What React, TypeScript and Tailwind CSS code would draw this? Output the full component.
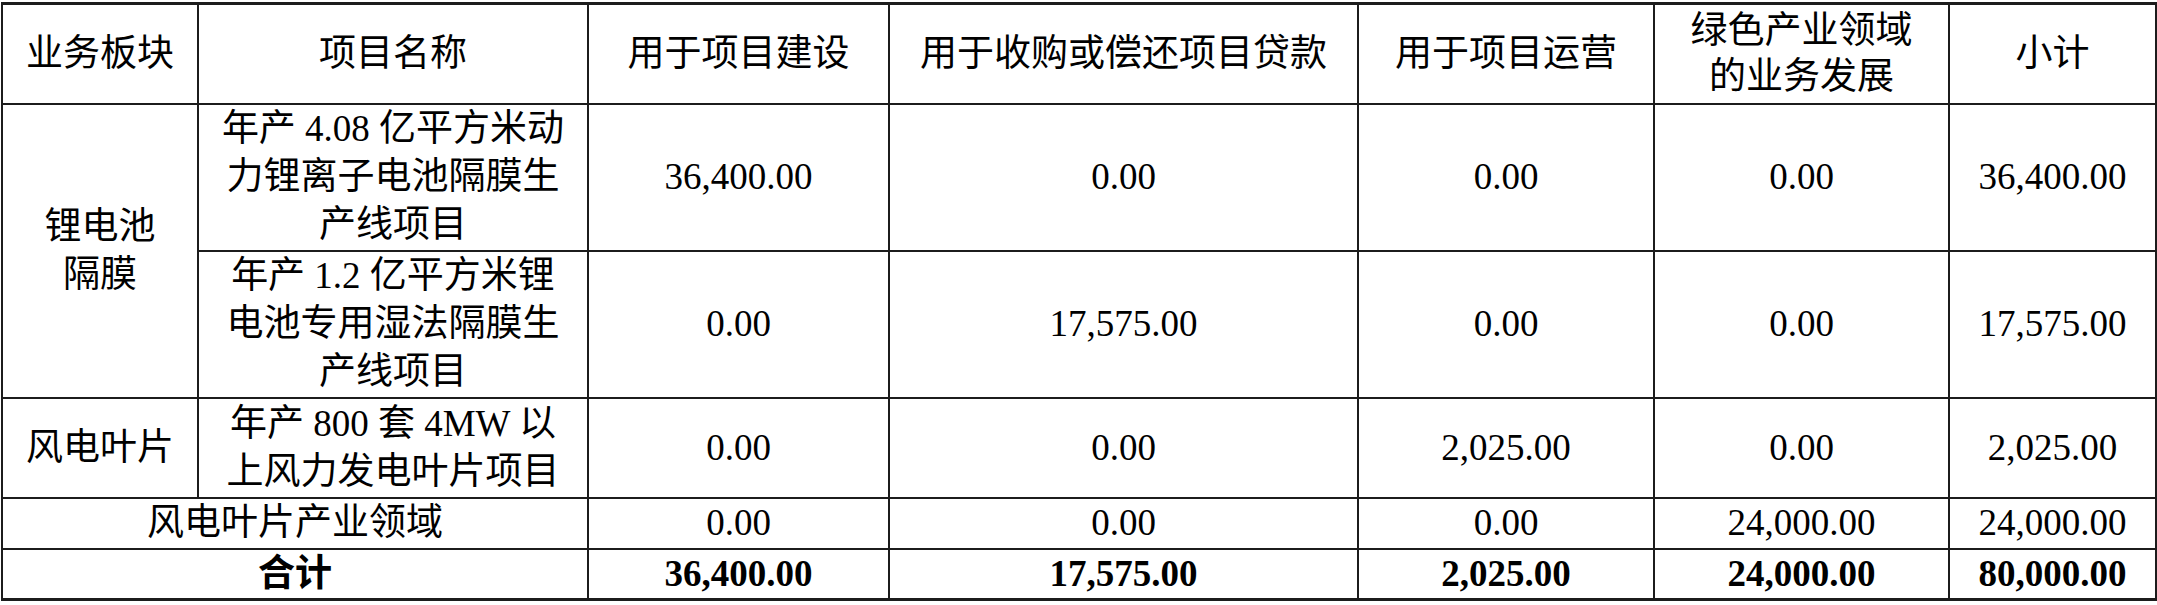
const cell = "border-2 border-[#1c1c1c] text-center align-middle px-0 py-0";

type Row = {
  name: string[];
  values: string[];
};

const lithiumRows: Row[] = [
  {
    name: ["年产 4.08 亿平方米动", "力锂离子电池隔膜生", "产线项目"],
    values: ["36,400.00", "0.00", "0.00", "0.00", "36,400.00"],
  },
  {
    name: ["年产 1.2 亿平方米锂", "电池专用湿法隔膜生", "产线项目"],
    values: ["0.00", "17,575.00", "0.00", "0.00", "17,575.00"],
  },
];

function Lines({ lines }: { lines: string[] }) {
  return (
    <>
      {lines.map((l, i) => (
        <div key={i} className="whitespace-nowrap">
          {l}
        </div>
      ))}
    </>
  );
}

export default function App() {
  return (
    <div className="w-[2157px] h-[605px] bg-white pt-[2px] pl-[1px]">
      <table
        className="table-fixed border-collapse w-[2154px] text-black text-[37px] leading-[48px]"
        style={{ fontFamily: '"Liberation Serif", "Noto Sans CJK SC", serif' }}
      >
        <colgroup>
          <col className="w-[196px]" />
          <col className="w-[390px]" />
          <col className="w-[301px]" />
          <col className="w-[469px]" />
          <col className="w-[296px]" />
          <col className="w-[295px]" />
          <col className="w-[207px]" />
        </colgroup>
        <tbody>
          {/* header */}
          <tr className="h-[100px]">
            <td className={cell + " border-t-[3px]"}>业务板块</td>
            <td className={cell + " border-t-[3px]"}>项目名称</td>
            <td className={cell + " border-t-[3px]"}>用于项目建设</td>
            <td className={cell + " border-t-[3px]"}>用于收购或偿还项目贷款</td>
            <td className={cell + " border-t-[3px]"}>用于项目运营</td>
            <td className={cell + " border-t-[3px] leading-[46px]"}>
              <Lines lines={["绿色产业领域", "的业务发展"]} />
            </td>
            <td className={cell + " border-t-[3px]"}>小计</td>
          </tr>

          {/* 锂电池隔膜 */}
          {lithiumRows.map((row, i) => (
            <tr key={i} className="h-[147px]">
              {i === 0 && (
                <td rowSpan={2} className={cell}>
                  <Lines lines={["锂电池", "隔膜"]} />
                </td>
              )}
              <td className={cell}>
                <Lines lines={row.name} />
              </td>
              {row.values.map((v, j) => (
                <td key={j} className={cell}>
                  {v}
                </td>
              ))}
            </tr>
          ))}

          {/* 风电叶片 */}
          <tr className="h-[100px]">
            <td className={cell}>风电叶片</td>
            <td className={cell}>
              <Lines lines={["年产 800 套 4MW 以", "上风力发电叶片项目"]} />
            </td>
            <td className={cell}>0.00</td>
            <td className={cell}>0.00</td>
            <td className={cell}>2,025.00</td>
            <td className={cell}>0.00</td>
            <td className={cell}>2,025.00</td>
          </tr>

          <tr className="h-[51px]">
            <td colSpan={2} className={cell}>
              风电叶片产业领域
            </td>
            <td className={cell}>0.00</td>
            <td className={cell}>0.00</td>
            <td className={cell}>0.00</td>
            <td className={cell}>24,000.00</td>
            <td className={cell}>24,000.00</td>
          </tr>

          {/* 合计 */}
          <tr className="h-[51px] font-bold">
            <td colSpan={2} className={cell + " border-b-[3px]"}>
              合计
            </td>
            <td className={cell + " border-b-[3px]"}>36,400.00</td>
            <td className={cell + " border-b-[3px]"}>17,575.00</td>
            <td className={cell + " border-b-[3px]"}>2,025.00</td>
            <td className={cell + " border-b-[3px]"}>24,000.00</td>
            <td className={cell + " border-b-[3px]"}>80,000.00</td>
          </tr>
        </tbody>
      </table>
    </div>
  );
}
